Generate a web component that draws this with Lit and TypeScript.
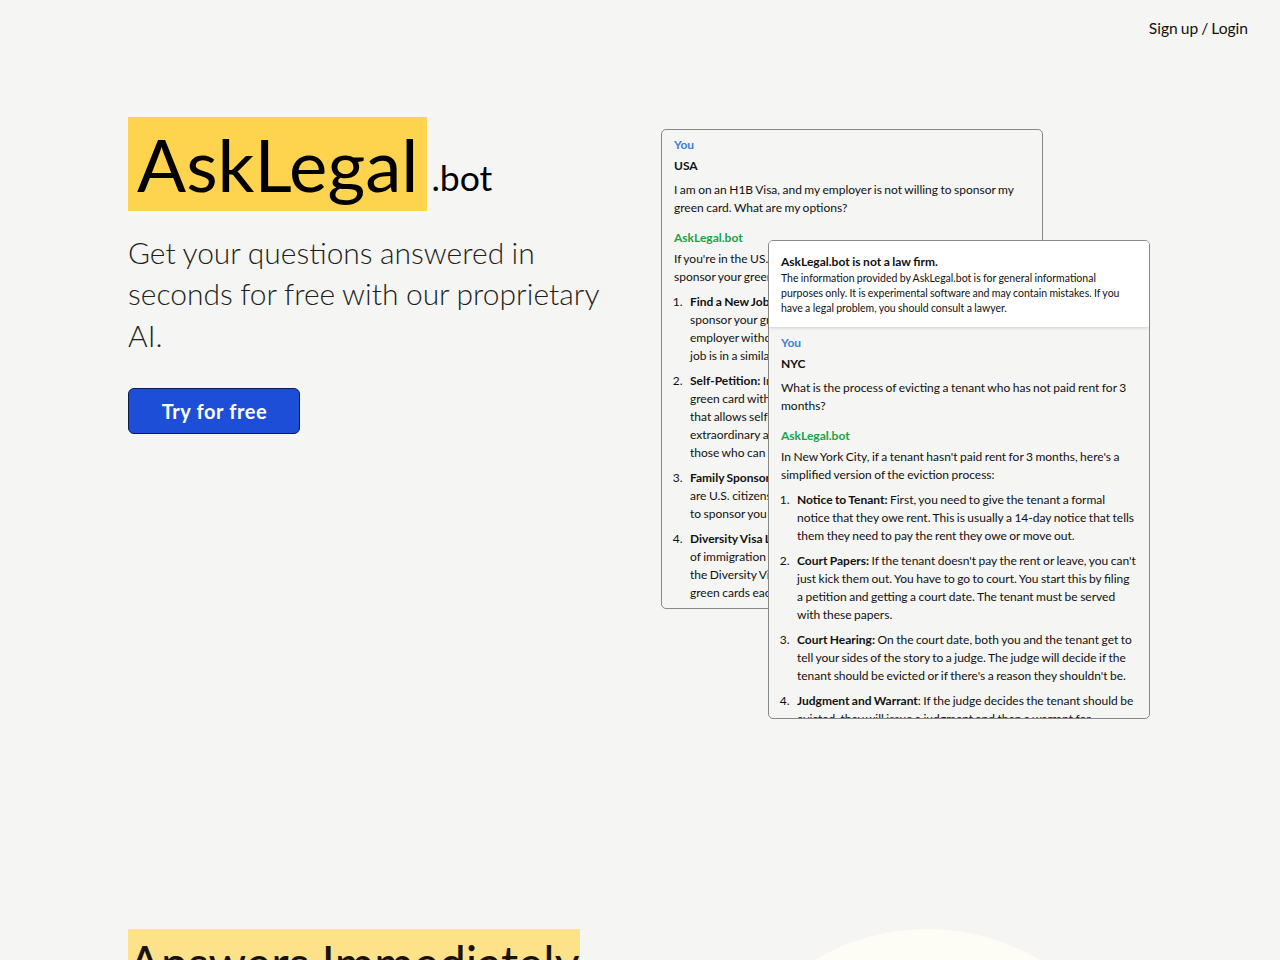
import { LitElement, html, css } from "lit";
import { customElement } from "lit/decorators.js";

@customElement("app-root")
export class AppRoot extends LitElement {
  static styles = css`
    :host { display: block; height: 960px; overflow: hidden; background: #f5f5f3; font-family: Lato, sans-serif; color: #000; }
    .top { display: flex; justify-content: flex-end; padding: 18px 32px 0 0; height: 117px; box-sizing: border-box; font-size: 15.6px; line-height: 20px; color: #111; word-spacing: -1px; }
    .hero { display: grid; grid-template-columns: 480px 1fr; padding-left: 128px; height: 794px; }
    .brand { display: flex; align-items: flex-end; }
    .mark { background: #fed44e; font-size: 72.6px; line-height: 94px; padding: 0 9px; }
    .tld { font-size: 35.6px; line-height: 40px; margin: 0 0 13px 4px; }
    .lead { font-size: 30px; font-weight: 300; line-height: 41.5px; margin: 20.5px 0 0; color: #1f1f1f; word-spacing: -0.7px; }
    .cta { display: inline-block; margin-top: 31.5px; width: 172px; height: 46px; box-sizing: border-box; background: #1d4ed8; color: #fff; border: 1px solid #0b1b4d; border-radius: 6px; font: 700 20px/45px Lato, sans-serif; letter-spacing: 0.6px; text-align: center; padding-left: 1px; }
    .canvas { position: relative; }
    .card { position: absolute; width: 382px; box-sizing: border-box; border: 1px solid #888; border-radius: 5px; background: #f5f5f3; overflow: hidden; font-size: 12px; line-height: 18px; color: #111; word-spacing: -0.6px; }
    .c1 { left: 53px; top: 12px; height: 480px; padding: 6px 12px; }
    .c2 { left: 160px; top: 123px; height: 479px; }
    .notice { background: #fff; padding: 12px 12px 11px; box-shadow: 0 1px 3px rgba(0,0,0,.15); font-size: 10.5px; line-height: 15px; position: relative; word-spacing: -0.35px; }
    .notice b { display: block; font-size: 12px; line-height: 18px; }
    .body { padding: 7px 12px; }
    .you { color: #3b82d6; font-weight: 700; }
    .bot { color: #16a34a; font-weight: 700; margin-top: 12px; }
    .loc { font-weight: 700; margin-top: 3px; }
    p { margin: 6px 0 0; }
    .bot + p { margin-top: 3px; }
    ol { margin: 7px 0 0; padding-left: 16px; }
    li { margin-bottom: 7px; }
    li::marker { content: counter(list-item) ". \\00a0\\00a0"; }
    .next { position: relative; height: 49px; overflow: hidden; padding: 18px 0 0 128px; box-sizing: border-box; }
    .h2 { position: relative; display: block; background: #fde28a; font-size: 48px; line-height: 68px; height: 31px; overflow: hidden; width: 452px; text-align: center; color: #1a1208; white-space: nowrap; }
    .blob { position: absolute; left: 707px; top: 18px; width: 440px; height: 440px; border-radius: 50%; background: #fdfdf5; }
  `;
  render() {
    return html`
      <div class="top">Sign up / Login</div>
      <div class="hero">
        <div>
          <div class="brand"><span class="mark">AskLegal</span><span class="tld">.bot</span></div>
          <p class="lead">Get your questions answered in seconds for free with our proprietary AI.</p>
          <a class="cta">Try for free</a>
        </div>
        <div class="canvas">
          <div class="card c1">
            <div class="you">You</div>
            <div class="loc">USA</div>
            <p>I am on an H1B Visa, and my employer is not willing to sponsor my green card. What are my options?</p>
            <div class="bot">AskLegal.bot</div>
            <p>If you're in the US. on an H1B visa and your employer won't<br />sponsor your green card, here are some options:</p>
            <ol>
              <li><b>Find a New Job:</b> Look for an employer willing to<br />sponsor your green card. You can change<br />employer without losing status as long as the new<br />job is in a similar field.</li>
              <li><b>Self-Petition:</b> In some cases you can apply for a<br />green card without an employer, using a category<br />that allows self-petition, such as EB-1 for<br />extraordinary ability or EB-2 NIW for<br />those who can show national interest.</li>
              <li><b>Family Sponsorship:</b> If you have relatives who<br />are U.S. citizens or permanent residents, they may<br />to sponsor you for a green card.</li>
              <li><b>Diversity Visa Lottery:</b> If you are from a country with low rates<br />of immigration to the US, you may apply for<br />the Diversity Visa program, which offers 50,000<br />green cards each year.</li>
            </ol>
          </div>
          <div class="card c2">
            <div class="notice"><b>AskLegal.bot is not a law firm.</b>The information provided by AskLegal.bot is for general informational purposes only. It is experimental software and may contain mistakes. If you have a legal problem, you should consult a lawyer.</div>
            <div class="body">
              <div class="you">You</div>
              <div class="loc">NYC</div>
              <p>What is the process of evicting a tenant who has not paid rent for 3 months?</p>
              <div class="bot">AskLegal.bot</div>
              <p>In New York City, if a tenant hasn't paid rent for 3 months, here's a simplified version of the eviction process:</p>
              <ol>
                <li><b>Notice to Tenant:</b> First, you need to give the tenant a formal notice that they owe rent. This is usually a 14-day notice that tells them they need to pay the rent they owe or move out.</li>
                <li><b>Court Papers:</b> If the tenant doesn't pay the rent or leave, you can't just kick them out. You have to go to court. You start this by filing a petition and getting a court date. The tenant must be served with these papers.</li>
                <li><b>Court Hearing:</b> On the court date, both you and the tenant get to tell your sides of the story to a judge. The judge will decide if the tenant should be evicted or if there's a reason they shouldn't be.</li>
                <li><b>Judgment and Warrant</b>: If the judge decides the tenant should be evicted, they will issue a judgment and then a warrant for</li>
              </ol>
            </div>
          </div>
        </div>
      </div>
      <div class="next"><div class="blob"></div><div class="h2">Answers Immediately</div></div>
    `;
  }
}
